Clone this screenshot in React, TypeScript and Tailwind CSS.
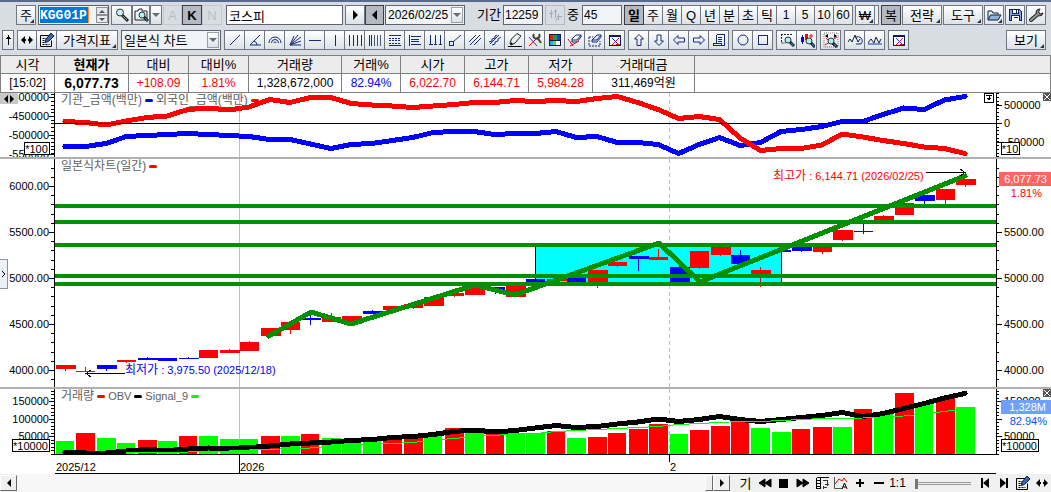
import React from "react";
import clsx from "clsx";

type Candle = [top: number, bottom: number, high: number, low: number, up: 0 | 1];

const LEFT = 55;
const WIDTH = 941;
const STEP = 900 / 44;
const RED = "#ff0000";
const BLUE = "#0000ff";
const GREEN = "#009000";
const LIME = "#00ff00";

const cx = (i: number) => 65 + i * STEP;
const pct = (x: number) => `${((x - LEFT) / WIDTH) * 100}%`;
const points = (ys: number[], from = 0) => ys.map((y, i) => `${cx(i + from)},${y}`).join(" ");

const candles: Candle[] = [
  [365, 369, 365, 371, 1], [371, 372, 367, 372, 1], [365, 369, 365, 371, 0], [360, 362, 360, 363, 1],
  [358, 360, 357, 360, 0], [358, 361, 358, 361, 0], [358, 359, 357, 359, 0], [350, 358, 350, 358, 1],
  [350, 353, 349, 353, 1], [342, 351, 341, 351, 1], [328, 336, 328, 336, 1], [322, 330, 322, 334, 1],
  [318, 320, 315, 325, 0], [317, 322, 313, 322, 1], [316, 324, 316, 324, 1], [311, 314, 310, 314, 0],
  [306, 310, 306, 310, 1], [304, 308, 304, 309, 1], [297, 306, 297, 306, 1], [293, 296, 293, 297, 1],
  [285, 295, 285, 295, 1], [287, 290, 287, 294, 0], [286, 297, 286, 297, 1], [279, 282, 279, 282, 0],
  [279, 281, 276, 281, 1], [278, 282, 278, 282, 0], [270, 283, 270, 288, 1], [262, 266, 262, 267, 1],
  [256, 259, 256, 271, 0], [257, 260, 249, 260, 1], [267, 282, 265, 282, 0], [251, 268, 251, 269, 1],
  [247, 255, 247, 256, 1], [255, 264, 250, 264, 0], [270, 274, 267, 287, 1], [250, 252, 250, 252, 0],
  [247, 251, 247, 252, 0], [247, 252, 247, 254, 1], [230, 240, 230, 241, 1], [231, 232, 224, 234, 0],
  [216, 220, 215, 220, 1], [203, 215, 203, 215, 1], [195, 201, 195, 204, 0], [189, 200, 189, 204, 1],
  [179, 185, 179, 187, 1],
];

const foreign = [
  121.5, 122.5, 125, 121, 117.5, 116, 109.5, 108, 110, 107, 99.5, 102.5, 97.5, 97.5, 103.5, 105, 106, 107.5,
  106, 104.5, 102.5, 102.5, 100.5, 101.5, 100.5, 101.5, 98.5, 96.5, 102.5, 109.5, 118.5, 116.5, 119.5, 138,
  150.5, 148.5, 148.5, 145, 134, 137, 140.5, 143.5, 147, 148.5, 153.5,
];
const institution = [
  146.5, 146.5, 143.5, 136.5, 135.5, 134.5, 133.5, 134.5, 135.5, 136.5, 139.5, 139.5, 144, 148.5, 144.5,
  143.5, 140.5, 137.5, 132.5, 131.5, 131.5, 134.5, 133.5, 133.5, 131.5, 137.5, 136.5, 142.5, 142.5, 144.5,
  153.5, 144.5, 137.5, 145.5, 142.5, 131.5, 129.5, 126.5, 121.5, 121.5, 114.5, 108, 109.5, 100, 96.5,
];

const volumeTops = [
  441, 433, 438, 443, 440, 441, 436, 436, 439, 439, 436, 436, 434, 438, 441, 441, 439, 438, 435, 428, 433,
  433, 433, 433, 431, 438, 437, 433, 429, 424, 434, 430, 426, 422, 428, 432, 429, 427, 427, 409, 414, 393,
  403, 398, 407,
];
const volumeUpDays = new Set([1, 4, 6, 10, 12, 16, 17, 19, 21, 24, 26, 27, 28, 29, 31, 32, 33, 36, 37, 39, 41, 43]);

const obv = [
  452.5, 453, 453, 451, 449.5, 450.5, 449, 448, 448.5, 447.5, 446, 444, 443, 442, 440.5, 439.5, 437.5, 436.5,
  434.5, 431.5, 430, 432, 430.5, 428, 425.5, 427.5, 426.5, 424, 422, 419, 421.5, 419.5, 416.5, 419.5, 421.5,
  419.5, 417.5, 415.5, 412.5, 416.5, 413.5, 408.5, 403.5, 398, 393.5,
];
const signal = [
  453, 452.5, 452, 452, 451.5, 451, 450, 449.5, 448.5, 448, 446, 444.5, 444, 443.5, 442.5, 440, 438.5, 436.5,
  435.5, 433.5, 433.5, 431.5, 430.5, 429.5, 428.5, 427.5, 426.5, 424.5, 423.5, 422.5, 421.5, 421.5, 420.5,
  419.5, 418.5, 418.5, 418, 417.5, 416, 414, 411.5, 408.5,
];

/* ---------- icons ---------- */

const NAVY = "#16297c";

const Icon = ({ children, soft = false, w = 16 }: { children: React.ReactNode; soft?: boolean; w?: number }) => (
  <svg
    width={w}
    height="16"
    viewBox={`0 0 ${w} 16`}
    fill="none"
    stroke={NAVY}
    shapeRendering={soft ? "auto" : "crispEdges"}
    className="shrink-0"
    aria-hidden="true"
  >
    {children}
  </svg>
);

const Lens = ({ x, y }: { x: number; y: number }) => (
  <g>
    <path d={`M${x + 2} ${y + 2}l4 4`} stroke="#111" strokeWidth="3" />
    <path d={`M${x + 3} ${y + 3}l2.5 2.5`} stroke="#2a7fd0" strokeWidth="1.2" />
    <circle cx={x} cy={y} r="3" fill="#a5f3f5" stroke="#333" />
  </g>
);

const Notepad = () => (
  <Icon soft>
    <path d="M1.500 3.500h9M1.500 3.500v11h11v-6" stroke="#000" />
    <path d="M3.500 6.500h4M3.500 8.500h3M3.500 10.500h3M3.500 12.500h7" stroke="#000" strokeDasharray="2 1" />
    <path d="M12 1l3 3-5.500 5.500-3.500 1 1-3.500z" fill="#3d66a8" stroke="#0b1c3c" />
  </Icon>
);

const LeftRight = () => (
  <Icon soft w={14}>
    <path d="M1 8l4-4v8zM13 8l-4-4v8z" fill="#000" stroke="none" />
    <path d="M4 8h2M8 8h2" stroke="#000" strokeWidth="2" />
  </Icon>
);

const WindowX = () => (
  <Icon>
    <rect x="2.500" y="3.500" width="11" height="10" fill="#fff" stroke="#0a1a60" />
    <path d="M2 4h12" stroke="#0a1a60" strokeWidth="2" />
    <path d="M5 6l6 6" stroke="#1030ff" />
    <path d="M12 6l-7 7M9 12.500h4" stroke="#f00" />
  </Icon>
);

const drawTools: [string, React.ReactNode][] = [
  ["추세선", <Icon soft><path d="M3 13L13 3" /></Icon>],
  ["각도선", <Icon soft><path d="M13 3L3 13h11M7 9q3 1 3 4" /></Icon>],
  ["원호", <Icon soft><path d="M2 11a6 6 0 0 1 12 0M4.500 11a3.500 3.500 0 0 1 7 0M7 11a1 1 0 0 1 2 0" /></Icon>],
  ["팬", <Icon soft><path d="M3 13L14 9M3 13l11-8M3 13l8-10M3 13L7 4M3 13h11" /></Icon>],
  ["수평선", <Icon><path d="M2 8.500h12" /></Icon>],
  ["수직선", <Icon><path d="M8.500 3v11" /></Icon>],
  ["등분선", <Icon><path d="M2.500 3v11M6.500 3v11M10.500 3v11M14.500 3v11" /></Icon>],
  ["피보나치 시간대", <Icon><path d="M2.500 3v11M4.500 3v11" /><path d="M7.500 3v11M10.500 3v11M13.500 3v11" stroke="#4a5a78" /></Icon>],
  ["피보나치 되돌림", <Icon><path d="M2 3.500h12M2 13.500h12" /><path d="M2 6.500h12M2 8.500h12M2 11.500h12" strokeDasharray="2 1" /></Icon>],
  ["조정선", <Icon><path d="M2.500 3v11M4 4.500h10M4 7.500h8M4 9.500h8M4 12.500h10" /></Icon>],
  ["주기선", <Icon><path d="M3.500 3v9M8.500 3v9M13.500 3v9M2 12.500h4M7 12.500h3M12 12.500h3" /></Icon>],
  ["갠선", <Icon soft><path d="M6 10L14 3" /><rect x="2.500" y="9.500" width="4" height="4" /></Icon>],
  ["평행선", <Icon soft><path d="M2 10l7-7M3 13L13 3M7 13l7-7" /></Icon>],
  ["회귀선", <Icon soft><path d="M2 10l3-1 0-2 3-1 0-2 2-1M5 13l3-1 0-2 3-1 0-2 3-2M3 12L12 3" /></Icon>],
  ["그리기", <Icon soft><path d="M3 11l1.500-4L10 1.500l4 2.500-6 7-4 2z" fill="#eee" stroke="#222" /><path d="M1 14.500h14" stroke="#000" /><path d="M3 13l3-1-2-2z" fill="#000" stroke="none" /></Icon>],
  ["설정", <Icon soft><path d="M2 14L10 6" stroke="#f00" /><path d="M2 5l8 9" stroke="#1030ff" /><path d="M10 5l4 6" stroke="#444" strokeWidth="2" /><path d="M7 2a3 3 0 1 0 5 0" stroke="#444" strokeWidth="2" /></Icon>],
  ["색상", <Icon><g stroke="none"><path fill="#111a40" d="M2 2h12v12H2z" /><path fill="#e02020" d="M3 3h3v5H3z" /><path fill="#10a050" d="M6 3h4v5H6z" /><path fill="#1540e0" d="M10 3h3v5h-3z" /><path fill="#5bdc40" d="M6 9h3v4H6z" /><path fill="#fff" d="M9 9h4v4H9z" /><path fill="#20b0e0" d="M3 9h3v4H3z" /></g></Icon>],
  ["지우기", <Icon soft><path d="M5 7l4-4h5l-4 5H5z" fill="#fff" /><path d="M5 8v2h5l4-5V3" /><path d="M1 7l5 7M12 9l-9 5" stroke="#f00" /></Icon>],
  ["영역 지우기", <Icon soft><path d="M2 5h4M2 5v9h11V9" strokeDasharray="2 1" /><path d="M5 8l5-5h4l-4 5z" fill="#dce8f8" /><path d="M5 8v2h5l4-5V3" /></Icon>],
  ["전체 지우기", <WindowX />],
];

const arrowTools: [string, React.ReactNode][] = [
  ["위쪽", <Icon soft><path d="M8 2.500l4.500 4.500H10v6.500H6V7H3.500z" /></Icon>],
  ["아래쪽", <Icon soft><path d="M8 13.500L3.500 9H6V3h4v6h2.500z" /></Icon>],
  ["왼쪽", <Icon soft><path d="M2.500 8L7 3.500V6h6.500v4H7v2.500z" /></Icon>],
  ["오른쪽", <Icon soft><path d="M13.500 8L9 3.500V6H2.500v4H9v2.500z" /></Icon>],
  ["메모", <Icon><path d="M5.500 2.500h8v9M5.500 2.500v9M7 5.500h4M7 7.500h4M7 9.500h4M2.500 11.500h8v2h-8zM13 11.500v2h-3" /></Icon>],
];

/* ---------- small controls ---------- */

const face = "bg-linear-to-b from-white to-[#dbe2e8]";

type BtnProps = {
  label?: string;
  className?: string;
  dark?: boolean;
  corner?: boolean;
  children: React.ReactNode;
};

const Btn = ({ label, className, dark, corner, children }: BtnProps) => (
  <button
    type="button"
    aria-label={label}
    className={clsx(
      "relative flex h-5 shrink-0 items-center justify-center overflow-hidden border text-[13px] leading-none",
      dark ? "border-[#3b3e46] bg-[#b4b8c0]" : "border-[#717780]",
      !dark && face,
      className ?? "w-5"
    )}
  >
    {children}
    {corner && <span className="absolute right-px bottom-px border-2 border-transparent border-r-[#333] border-b-[#333]" />}
  </button>
);

const ToolGroup = ({ tools }: { tools: [string, React.ReactNode][] }) => (
  <div className="flex shrink-0 border-l border-[#717780]">
    {tools.map(([label, icon]) => (
      <Btn key={label} label={label} className="w-5 border-l-0">
        {icon}
      </Btn>
    ))}
  </div>
);

const DropArrow = () => (
  <span className={clsx("pointer-events-none absolute top-[2px] right-[2px] bottom-[2px] flex w-3 items-center justify-center border border-[#9aa0a8]", face)}>
    <span className="mt-1 border-4 border-transparent border-t-[#666c76]" />
  </span>
);

const field = "h-5 shrink-0 border border-[#5d636d] bg-[#f1f4f7] leading-none outline-none";

/* ---------- toolbars ---------- */

const TopBar = () => (
  <div className="flex h-[29px] items-start border-t-2 border-[#5a6a8c] pt-[3px] pr-[5px] pl-4">
    <Btn corner>주</Btn>
    <div className="ml-0.5 flex h-5 w-[71px] shrink-0 items-center border border-[#5d636d] bg-[#f1f4f7] pl-px">
      <input
        aria-label="종목코드"
        defaultValue="KGG01P"
        className="h-4 w-[49px] border-r border-[#ff8c1a] bg-[#0078d7] font-['Liberation_Mono',monospace] text-[13px] leading-none font-bold text-white outline-none"
      />
      <div className="ml-auto flex h-4 w-3 flex-col">
        <button type="button" aria-label="다음 종목" className="flex h-2 items-center justify-center border border-[#8c9199] bg-[#e6eaee]">
          <span className="mb-[3px] border-[3px] border-transparent border-b-[#555]" />
        </button>
        <button type="button" aria-label="이전 종목" className="flex h-2 items-center justify-center border border-[#8c9199] bg-[#e6eaee]">
          <span className="mt-[3px] border-[3px] border-transparent border-t-[#555]" />
        </button>
      </div>
    </div>
    <Btn label="종목검색" className="ml-0.5 w-[21px]">
      <Icon soft>
        <path d="M8 8l6 6" stroke="#222" strokeWidth="3" />
        <path d="M9 9l4 4" stroke="#999" />
        <circle cx="6" cy="5.500" r="3.500" fill="#cdeef5" stroke="#333" />
      </Icon>
    </Btn>
    <Btn label="화면캡처" className="w-[18px]">
      <Icon soft>
        <path d="M2 4h3l1-2h3v2h5v9H2z" stroke="#222" />
        <Lens x={9} y={8} />
      </Icon>
    </Btn>
    <Btn label="캡처 메뉴" className="w-3">
      <span className="mt-1 border-4 border-transparent border-t-[#666c76]" />
    </Btn>
    <button type="button" className="ml-px h-5 w-[19px] shrink-0 border border-[#c4c9d0] text-[13px] leading-none text-[#b9bfc7]">A</button>
    <Btn dark><b>K</b></Btn>
    <button type="button" className="h-5 w-5 shrink-0 border border-[#c4c9d0] text-[13px] leading-none text-[#b9bfc7]">N</button>
    <input
      aria-label="종목명"
      defaultValue="코스피"
      className="ml-1 h-5 min-w-0 flex-1 border border-[#5d636d] bg-white pl-0.5 text-[13px] leading-none outline-none"
    />
    <Btn label="다음" className="ml-0.5 w-5"><span className="ml-1.5 border-[5px] border-transparent border-l-black" /></Btn>
    <Btn label="이전" dark className="w-[19px]"><span className="mr-1.5 border-[5px] border-transparent border-r-black" /></Btn>
    <div className="relative ml-px shrink-0">
      <select aria-label="조회일자" className={clsx(field, "block w-20 appearance-none pl-0.5 text-xs")}>
        <option>2026/02/25</option>
      </select>
      <DropArrow />
    </div>
    <label htmlFor="span" className="ml-3 flex h-5 w-[26px] shrink-0 items-center text-[13px] whitespace-nowrap">기간</label>
    <input id="span" defaultValue="12259" className={clsx(field, "w-10 pl-px text-xs")} />
    <button type="button" aria-label="차트 비교" className="ml-0.5 flex h-5 w-5 shrink-0 items-center justify-center border border-[#b4bac2]">
      <Icon>
        <path d="M4.500 3v8M2 6.500h4M8.500 2v9M7 4.500h3M11.500 7v6M10 9.500h5M8 13.500l3-2" stroke="#a4aab2" />
      </Icon>
    </button>
    <label htmlFor="shown" className="ml-0.5 flex h-5 w-[15px] shrink-0 items-center text-[13px]">중</label>
    <input id="shown" defaultValue="45" className={clsx(field, "w-10 pl-px text-xs")} />
    <div className="ml-0.5 flex shrink-0">
      <Btn dark><b>일</b></Btn>
      {["주", "월", "Q", "년", "분", "초", "틱", "1", "5", "10", "60"].map((p) => (
        <Btn key={p} className="w-[19px] border-l-0">{/\d/.test(p) ? <span className="text-xs">{p}</span> : p}</Btn>
      ))}
    </div>
    <Btn corner className="ml-0.5 w-5">₩</Btn>
    <span className="h-5 w-1 shrink-0 border-y border-r border-[#717780] bg-[#eef1f4]" />
    <Btn dark className="ml-0.5 w-5">복</Btn>
    <Btn corner className="ml-px w-10">전략</Btn>
    <Btn corner className="ml-px w-10">도구</Btn>
    <Btn corner label="열기" className="ml-px w-5">
      <Icon soft>
        <path d="M2 13V4h4l1 2h5v2" fill="#dfe9f7" stroke="#123" />
        <path d="M2 13l2.500-5H15l-3 5z" fill="#8fb0dc" stroke="#123" />
      </Icon>
    </Btn>
    <Btn label="저장" className="ml-px w-5">
      <Icon>
        <path d="M2.500 2.500h10l2 2v9h-12z" fill="#7fa2d8" stroke="#14264d" />
        <path d="M5.500 2.500h6v4h-6zM4.500 13.500v-5h8v5" fill="#fff" stroke="#14264d" />
        <path d="M9.500 3v3M6.500 10.500h4" stroke="#14264d" />
      </Icon>
    </Btn>
    <Btn label="환경설정" className="ml-px w-5">
      <Icon soft>
        <path d="M3 13L10 7" stroke="#222" strokeWidth="4" strokeLinecap="round" />
        <path d="M12 2a3.500 3.500 0 1 0 3 4l-3 1-1.500-2z" fill="#888" stroke="#222" />
        <path d="M3 13L10 7" stroke="#999" strokeWidth="2" strokeLinecap="round" />
      </Icon>
    </Btn>
  </div>
);

const ToolBar = () => (
  <div className="flex h-[26px] items-start gap-[3px] pt-px pr-[5px] pl-0.5">
    <Btn label="위로" className="w-3">
      <Icon w={8}><path d="M4.500 3v10M2 6.500h5M3 5.500h3" stroke="#000" /></Icon>
    </Btn>
    <div className="flex w-[101px] shrink-0">
      <Btn label="좌우 이동" className="w-5"><LeftRight /></Btn>
      <Btn label="메모장" className="w-5 border-l-0"><Notepad /></Btn>
      <Btn corner className="w-[61px] border-l-0">가격지표</Btn>
    </div>
    <div className="relative shrink-0">
      <select aria-label="차트 종류" className={clsx(field, "block w-[100px] appearance-none pl-0.5 text-[13px]")}>
        <option>일본식 차트</option>
      </select>
      <DropArrow />
    </div>
    <ToolGroup tools={drawTools} />
    <ToolGroup tools={arrowTools} />
    <ToolGroup
      tools={[
        ["원", <Icon soft><circle cx="8" cy="8" r="5" /></Icon>],
        ["사각형", <Icon><rect x="3.500" y="3.500" width="9" height="9" /></Icon>],
      ]}
    />
    <ToolGroup
      tools={[
        ["영역 확대", <Icon soft><path d="M2 2.500h12M2.500 2v9h4" stroke="#222" strokeDasharray="2 1" /><Lens x={9} y={8} /></Icon>],
        ["봉 확대", <Icon soft><path d="M3.500 3v9" /><path d="M2 5h3v5H2z" fill={BLUE} stroke="none" /><path d="M6 2h3v6H6z" fill={RED} stroke="none" /><path d="M12 2v4M10 4h4" stroke="#f00" /><Lens x={10} y={9} /></Icon>],
      ]}
    />
    <ToolGroup
      tools={[
        ["전체 보기", <Icon soft><rect x="1" y="1" width="14" height="14" stroke="#777" strokeDasharray="1 1" /><path d="M2 13L14 5M3 6l8 8" stroke="#f00" /><path d="M2 4l3-2v4zM14 4l-3-2v4z" fill="#000" stroke="none" /><Lens x={8} y={9} /></Icon>],
      ]}
    />
    <ToolGroup
      tools={[
        ["파동", <Icon soft><path d="M1 10l2-3 2 3 3-7 3 7 2-3" stroke="#123" /><path d="M8 6a4 4 0 0 1 6 6H9" /></Icon>],
        ["지그재그", <Icon soft><path d="M1 11l3-4 3 4 2-6 3 6 2-4" stroke="#123" /><path d="M1 12h14" stroke="#1030c0" /></Icon>],
      ]}
    />
    <ToolGroup tools={[["닫기", <WindowX />]]} />
    <Btn corner className="ml-auto w-10">보기</Btn>
  </div>
);

/* ---------- quote ---------- */

const quote: { head: string; value: string; width: string; tone?: string; bold?: boolean }[] = [
  { head: "시각", value: "[15:02]", width: "w-[54px]" },
  { head: "현재가", value: "6,077.73", width: "w-[74px]", bold: true },
  { head: "대비", value: "+108.09", width: "w-[60px]", tone: "text-[#ff0000]" },
  { head: "대비%", value: "1.81%", width: "w-[60px]", tone: "text-[#ff0000]" },
  { head: "거래량", value: "1,328,672,000", width: "w-[93px]" },
  { head: "거래%", value: "82.94%", width: "w-[59px]", tone: "text-[#0000ff]" },
  { head: "시가", value: "6,022.70", width: "w-[64px]", tone: "text-[#ff0000]" },
  { head: "고가", value: "6,144.71", width: "w-[64px]", tone: "text-[#ff0000]" },
  { head: "저가", value: "5,984.28", width: "w-[64px]", tone: "text-[#ff0000]" },
  { head: "거래대금", value: "311,469억원", width: "w-[102px]" },
];

const QuoteTable = () => (
  <table className="w-full table-fixed border-collapse border border-[#808080] bg-white text-center text-xs">
    <thead>
      <tr className="h-[18px] bg-[#ececec]">
        {quote.map((q) => (
          <th key={q.head} scope="col" className={clsx("border border-[#808080] p-0 text-[13px] leading-4", q.width, q.bold ? "font-bold" : "font-normal")}>
            {q.head}
          </th>
        ))}
        <td className="border border-[#808080] p-0" />
      </tr>
    </thead>
    <tbody>
      <tr className="h-[19px]">
        {quote.map((q) => (
          <td key={q.head} className={clsx("border border-[#808080] p-0 leading-4", q.tone, q.bold && "text-sm leading-4 font-bold")}>
            {q.value}
          </td>
        ))}
        <td className="border border-[#808080] p-0" />
      </tr>
    </tbody>
  </table>
);

/* ---------- chart ---------- */

type AxisProps = {
  side: "left" | "right";
  top: number;
  height: number;
  base: number;
  minor: number;
  labels: [number, string][];
  children?: React.ReactNode;
};

// All panels share one vertical coordinate space, so each svg only shifts its viewBox.
const Axis = ({ side, top, height, base, minor, labels, children }: AxisProps) => {
  const left = side === "left";
  const ticks: number[] = [];
  for (let y = base; y < top + height; y += minor) ticks.push(Math.round(y));
  for (let y = base - minor; y > top; y -= minor) ticks.push(Math.round(y));
  return (
    <svg
      width="55"
      height={height}
      viewBox={left ? `0 ${top} 55 ${height}` : `996 ${top} 55 ${height}`}
      className="block shrink-0 text-[11px]"
      shapeRendering="crispEdges"
    >
      <path d={`M${left ? 54.5 : 996.5} ${top}v${height}`} stroke="#000" />
      {ticks.map((y) => (
        <path key={y} d={left ? `M51 ${y + 0.5}h3` : `M997 ${y + 0.5}h2`} stroke="#000" />
      ))}
      {labels.map(([y, text]) => (
        <g key={text}>
          <path d={left ? `M49 ${y + 0.5}h5` : `M997 ${y + 0.5}h5`} stroke="#000" />
          <text x={left ? 49 : 1004} y={y + 4} textAnchor={left ? "end" : "start"}>{text}</text>
        </g>
      ))}
      {children}
    </svg>
  );
};

const UnitBox = ({ x, y, w, text }: { x: number; y: number; w: number; text: string }) => (
  <g>
    <rect x={x + 0.5} y={y + 0.5} width={w} height="12" fill="#fff" stroke="#000" />
    <text x={x + w / 2} y={y + 11} textAnchor="middle">{text}</text>
  </g>
);

const Plot = ({ top, height, children }: { top: number; height: number; children: React.ReactNode }) => (
  <svg
    viewBox={`${LEFT} ${top} ${WIDTH} ${height}`}
    preserveAspectRatio="none"
    height={height}
    className="block w-full"
    shapeRendering="crispEdges"
    fill="none"
  >
    <path d={`M239.500 ${top}v${height}`} stroke="#c0c0c0" />
    <path d={`M669.500 ${top}v${height}`} stroke="#c0c0c0" strokeDasharray="4 3" />
    {children}
  </svg>
);

const Legend = ({ items }: { items: [string, string][] }) => (
  <div className="absolute top-0 left-1.5 flex h-3.5 items-center gap-[3px] whitespace-nowrap text-[#606060]">
    {items.map(([name, color]) => (
      <React.Fragment key={name}>
        <span className={clsx("leading-none", /[가-힣]/.test(name) ? "text-xs" : "text-[11px]")}>{name}</span>
        <span className="h-[3px] w-2 rounded-sm" style={{ backgroundColor: color }} />
      </React.Fragment>
    ))}
  </div>
);

const CloseBox = ({ label }: { label: string }) => (
  <button type="button" aria-label={label} className="absolute top-0 right-0 flex size-2 items-center justify-center bg-[#555]">
    <svg width="6" height="6" viewBox="0 0 6 6" stroke="#fff"><path d="M0 0l6 6M6 0L0 6" /></svg>
  </button>
);

const FlowPanel = () => (
  <section className="relative flex">
    <Axis side="left" top={93} height={64} base={116} minor={3.7}
      labels={[[97, "-400000"], [116, "-450000"], [135, "-500000"], [154, "-550000"]]}>
      <UnitBox x={24} y={142} w={25} text="*100" />
    </Axis>
    <div className="relative min-w-0 flex-1">
      <Plot top={93} height={64}>
        <polyline points={points(institution)} stroke={BLUE} strokeWidth="5" strokeLinecap="round" />
        <polyline points={points(foreign)} stroke={RED} strokeWidth="5" strokeLinecap="round" />
        <path d="M55 123.500h941" stroke="#000" />
      </Plot>
      <Legend items={[["기관_금액(백만)", BLUE], ["외국인_금액(백만)", RED]]} />
      <button type="button" aria-label="고정" className="absolute top-0 right-0.5 size-2.5 border border-black bg-white">
        <svg width="8" height="8" viewBox="0 0 8 8" stroke="#000" shapeRendering="crispEdges"><path d="M1 1.500h6M4 1v5M2 4.500h4M3 5.500h2" /></svg>
      </button>
    </div>
    <Axis side="right" top={93} height={64} base={123} minor={3.7}
      labels={[[105, "500000"], [123, "0"], [142, "-500000"]]}>
      <UnitBox x={1001} y={142} w={18} text="*10" />
    </Axis>
    <button type="button" aria-label="패널 이동" className="absolute top-0 left-0 flex h-[11px] w-[18px] items-center justify-center bg-[#c8c8c8]">
      <svg width="10" height="8" viewBox="0 0 10 8"><path d="M0 4l4-4v8zM10 4L6 0v8z" /></svg>
    </button>
    <CloseBox label="투자자 패널 닫기" />
  </section>
);

const PricePanel = () => (
  <section className="relative flex border-t-2 border-[#b0b0b0]">
    <Axis side="left" top={159} height={228} base={186} minor={9.2}
      labels={[[186, "6000.00"], [232, "5500.00"], [278, "5000.00"], [324, "4500.00"], [370, "4000.00"]]} />
    <div className="relative min-w-0 flex-1">
      <Plot top={159} height={228}>
        <rect x="535" y="245" width="247" height="39" fill="#00ffff" />
        <path d="M535.500 245v39M781.500 245v39" stroke="#000" />
        {candles.map(([top, bottom, high, low, up], i) => {
          const x = Math.round(56 + i * STEP);
          return (
            <g key={i} fill={up ? RED : BLUE}>
              <rect x={x} y={top} width={i % 2 ? 19 : 20} height={bottom - top} />
              <rect x={x + 9} y={high} width="1" height={low - high} />
            </g>
          );
        })}
        {[206, 222, 245, 276, 284].map((y) => (
          <path key={y} d={`M55 ${y}h941`} stroke={GREEN} strokeWidth="4" />
        ))}
        <polyline
          points="269,336 311,312 351,324 475,285 515,295 659,243 700,282 965,176"
          stroke={GREEN}
          strokeWidth="5"
          strokeLinecap="round"
          strokeLinejoin="round"
        />
        <path d="M125 373.500H86M91 370l-5 3.500 5 3.500M926 172.500h39M960 169l5 3.500-5 3.500" stroke="#000" />
      </Plot>
      <Legend items={[["일본식차트(일간)", RED]]} />
      <p className="absolute top-[204px] text-[11px] leading-[14px] whitespace-nowrap text-[#0000ff]" style={{ left: pct(125) }}>
        <span className="text-xs leading-[14px]">최저가</span> : 3,975.50 (2025/12/18)
      </p>
      <p className="absolute top-[10px] text-[11px] leading-[14px] whitespace-nowrap text-[#ff0000]" style={{ left: pct(773) }}>
        <span className="text-xs leading-[14px]">최고가</span> : 6,144.71 (2026/02/25)
      </p>
    </div>
    <Axis side="right" top={159} height={228} base={186} minor={9.2}
      labels={[[232, "5500.00"], [278, "5000.00"], [324, "4500.00"], [370, "4000.00"]]}>
      <rect x="999" y="172" width="52" height="14" fill="#ff6464" />
      <text x="1047" y="183" fill="#fff" textAnchor="end">6,077.73</text>
      <text x="1042" y="197" fill={RED} textAnchor="end">1.81%</text>
    </Axis>
    <button type="button" aria-label="사이드 열기" className="absolute top-[100px] left-0 flex h-[30px] w-2 items-center justify-center border border-l-0 border-[#8a93a5] bg-[#eef2f8]">
      <svg width="5" height="8" viewBox="0 0 5 8" fill="none" stroke="#000"><path d="M1 1l3 3-3 3" /></svg>
    </button>
  </section>
);

const VolumePanel = () => (
  <section className="relative flex border-t-2 border-[#b0b0b0]">
    <Axis side="left" top={389} height={66} base={401} minor={3.5}
      labels={[[401, "150000"], [419, "100000"], [436, "50000"]]}>
      <UnitBox x={12} y={439} w={37} text="*10000" />
    </Axis>
    <div className="relative min-w-0 flex-1">
      <Plot top={389} height={66}>
        {volumeTops.map((y, i) => (
          <rect key={i} x={Math.round(56 + i * STEP)} y={y} width={i % 3 ? 19 : 18} height={454 - y} fill={volumeUpDays.has(i) ? RED : LIME} />
        ))}
        <polyline points={points(obv)} stroke="#000" strokeWidth="5" strokeLinecap="round" />
        <polyline points={points(signal, volumeTops.length - signal.length)} stroke={LIME} />
        <path d="M55 454.500h941" stroke="#000" />
      </Plot>
      <Legend items={[["거래량", RED], ["OBV", "#000000"], ["Signal_9", LIME]]} />
    </div>
    <Axis side="right" top={389} height={66} base={401} minor={3.5}
      labels={[[401, "150000"], [436, "50000"]]}>
      <path d="M997 419.500h5" stroke="#000" />
      <rect x="1001" y="400" width="50" height="14" fill="#6ea0ff" />
      <text x="1046" y="411" fill="#fff" textAnchor="end">1,328M</text>
      <text x="1047" y="425" fill="#0055ff" textAnchor="end">82.94%</text>
      <UnitBox x={1001} y={439} w={37} text="*10000" />
    </Axis>
    <CloseBox label="거래량 패널 닫기" />
  </section>
);

const TimeAxis = () => (
  <div className="flex h-[19px] text-[11px] leading-none">
    <div className="w-[55px] shrink-0" />
    <div className="relative flex-1 border-b border-black">
      <span className="absolute top-[7px] left-px">2025/12</span>
      <span className="absolute top-0 h-full border-l border-black pt-[7px]" style={{ left: pct(239) }}>2026</span>
      <span className="absolute top-0 h-[5px] border-l border-black pt-[7px]" style={{ left: pct(669) }}>2</span>
    </div>
    <div className="w-[55px] shrink-0" />
  </div>
);

/* ---------- bottom bar ---------- */

const scrollBtn = "flex h-4 w-[17px] shrink-0 items-center justify-center border border-white border-r-[#696969] border-b-[#696969] bg-[#f0f0f0]";

const Mini = ({ label, children }: { label: string; children: React.ReactNode }) => (
  <button type="button" aria-label={label} className="flex h-4 w-[19px] shrink-0 items-center justify-center text-[13px] leading-none">
    {children}
  </button>
);

const BottomBar = () => (
  <div className="flex h-[18px] items-center bg-[#f0f0f0]">
    <button type="button" aria-label="왼쪽으로" className={scrollBtn}><span className="mr-1 border-4 border-transparent border-r-black" /></button>
    <div className="h-full min-w-0 flex-1 bg-[#f7f7f7]" />
    <span className="h-4 w-2 shrink-0 border border-white border-r-[#696969] border-b-[#696969]" />
    <button type="button" aria-label="오른쪽으로" className={scrollBtn}><span className="ml-1 border-4 border-transparent border-l-black" /></button>
    <div className="ml-1.5 flex shrink-0 items-center">
      <Mini label="기준">기</Mini>
      <Mini label="뒤로"><Icon soft w={14}><path d="M7 4v8L1 8zM13 4v8L7 8z" fill="#000" stroke="#000" /></Icon></Mini>
      <Mini label="정지"><span className="size-[9px] bg-black" /></Mini>
      <Mini label="앞으로"><Icon soft w={14}><path d="M1 4v8l6-4zM7 4v8l6-4z" fill="#000" stroke="#000" /></Icon></Mini>
      <Mini label="표"><Icon w={14}><path d="M1.500 2.500h12M1.500 2.500v11h4v-11M1 5.500h5M1 8.500h5M1 11.500h5" stroke="#000" /><path d="M8 5.500h4v5M7.500 12.500h4M10 9.500h4M8.500 11v3" stroke="#333" /></Icon></Mini>
      <Mini label="자동 추세"><Icon soft><path d="M1.500 2v11.500h8" stroke="#555" /><path d="M2 9l4-5 3 2 2-3 3 4" stroke="#f00" /><path d="M9 14l2.500-6L14 14M10 12h3" stroke="#000" /></Icon></Mini>
      <Mini label="확대"><Icon w={10}><path d="M1 8h8M5 4v8" stroke="#000" strokeWidth="2" /></Icon></Mini>
      <Mini label="축소"><Icon w={10}><path d="M0 8h10" stroke="#000" strokeWidth="2" /></Icon></Mini>
      <Mini label="원래 크기"><span className="text-xs">1:1</span></Mini>
    </div>
    <input
      type="range"
      aria-label="확대 비율"
      defaultValue="0"
      className="ml-2 h-[14px] w-[56px] shrink-0 appearance-none bg-transparent [&::-webkit-slider-runnable-track]:h-[3px] [&::-webkit-slider-runnable-track]:border-t [&::-webkit-slider-runnable-track]:border-b [&::-webkit-slider-runnable-track]:border-[#999] [&::-webkit-slider-thumb]:-mt-1 [&::-webkit-slider-thumb]:h-[10px] [&::-webkit-slider-thumb]:w-[3px] [&::-webkit-slider-thumb]:appearance-none [&::-webkit-slider-thumb]:bg-[#777]"
    />
    <div className="ml-1 flex shrink-0 items-center">
      <Mini label="처음"><Icon soft w={10}><path d="M9 3v10L3 8z" fill="#000" stroke="none" /><path d="M2 3v10" stroke="#000" strokeWidth="2" /></Icon></Mini>
      <Mini label="마지막"><Icon soft w={10}><path d="M1 3v10l6-5z" fill="#000" stroke="none" /><path d="M8 3v10" stroke="#000" strokeWidth="2" /></Icon></Mini>
      <Mini label="메모"><Notepad /></Mini>
      <Mini label="좌우"><LeftRight /></Mini>
    </div>
  </div>
);

export default function App() {
  return (
    <main className="w-full overflow-hidden bg-white font-['Liberation_Sans','Noto_Sans_CJK_KR',sans-serif] text-black">
      <header className="bg-[#d8dde3]">
        <TopBar />
        <ToolBar />
      </header>
      <QuoteTable />
      <FlowPanel />
      <PricePanel />
      <VolumePanel />
      <TimeAxis />
      <BottomBar />
    </main>
  );
}
